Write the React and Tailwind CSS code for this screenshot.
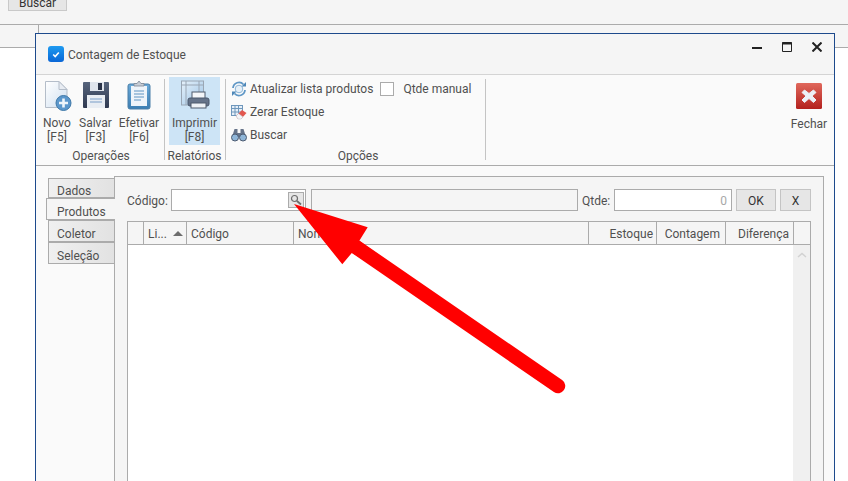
import React from 'react';

const NewIcon = () => (
  <svg width="30" height="32" viewBox="0 0 30 32">
    <defs>
      <linearGradient id="docFill" x1="0" y1="0" x2="1" y2="1">
        <stop offset="0" stopColor="#ffffff" />
        <stop offset="1" stopColor="#cfdff0" />
      </linearGradient>
    </defs>
    <path d="M3.5 2.5H17L25 10.5V28.5H3.5Z" fill="url(#docFill)" stroke="#b4bdc9" />
    <path d="M17 2.5V10.5H25Z" fill="#e8ecf2" stroke="#b4bdc9" />
    <circle cx="21.5" cy="24" r="7.5" fill="#5b97cc" stroke="#3f78a8" />
    <path d="M21.5 19.5V28.5M17 24H26" stroke="#eef5fb" strokeWidth="2.6" />
  </svg>
);

const SaveIcon = () => (
  <svg width="28" height="28" viewBox="0 0 28 28">
    <defs>
      <linearGradient id="floppy" x1="0" y1="0" x2="0" y2="1">
        <stop offset="0" stopColor="#56647c" />
        <stop offset="1" stopColor="#2f3950" />
      </linearGradient>
    </defs>
    <path d="M1 2a1 1 0 0 1 1-1h24a1 1 0 0 1 1 1v24a1 1 0 0 1-1 1H2a1 1 0 0 1-1-1Z" fill="url(#floppy)" />
    <rect x="8" y="1" width="14" height="9" fill="#dfe4ec" />
    <rect x="16" y="2" width="4" height="7" fill="#2a3348" />
    <rect x="5" y="14" width="18" height="13" fill="#e9edf3" />
    <path d="M8 18H20M8 21H20" stroke="#9fb8d6" strokeWidth="1.5" />
  </svg>
);

const ClipboardIcon = () => (
  <svg width="24" height="30" viewBox="0 0 24 30">
    <defs>
      <linearGradient id="clip" x1="0" y1="0" x2="0" y2="1">
        <stop offset="0" stopColor="#6aa9d8" />
        <stop offset="1" stopColor="#3a7db3" />
      </linearGradient>
    </defs>
    <rect x="1" y="4" width="22" height="25" rx="2" fill="url(#clip)" stroke="#4a7fa8" />
    <rect x="4" y="6" width="16" height="20" fill="#eef4fa" />
    <path d="M7 11H17M7 14H17M7 17H17M7 20H14" stroke="#5f93c2" strokeWidth="1.2" />
    <path d="M7 6V3.5H10L12 1L14 3.5H17V6Z" fill="#c7cdd6" stroke="#7c8794" strokeWidth="0.8" />
  </svg>
);

const PrinterIcon = () => (
  <svg width="30" height="32" viewBox="0 0 30 32">
    <defs>
      <linearGradient id="sheet" x1="0" y1="0" x2="1" y2="1">
        <stop offset="0" stopColor="#e6f1fa" />
        <stop offset="1" stopColor="#9dc4e6" />
      </linearGradient>
    </defs>
    <rect x="1.5" y="2" width="22" height="24" fill="url(#sheet)" stroke="#9aa6b4" />
    <path d="M1.5 6H23.5M6 2V26M19 2V13" stroke="#9aa6b4" />
    <rect x="12" y="13" width="13" height="7" fill="#f4f6f9" stroke="#4f5b6d" />
    <rect x="8" y="19" width="21" height="8" rx="2" fill="#66748a" stroke="#4b586d" />
    <rect x="11" y="24" width="15" height="5" fill="#eef2f6" stroke="#4f5b6d" />
  </svg>
);

const RefreshIcon = () => (
  <svg width="16" height="16" viewBox="0 0 16 16" fill="none">
    <circle cx="8" cy="8" r="3.8" fill="#e6f0f8" stroke="#8db6d8" />
    <path d="M2 7A6 6 0 0 1 12.5 3.5" stroke="#5f97c6" strokeWidth="1.8" />
    <path d="M14 9A6 6 0 0 1 3.5 12.5" stroke="#5f97c6" strokeWidth="1.8" />
    <path d="M10.5 5.5H15V1Z" fill="#4f88b8" />
    <path d="M5.5 10.5H1V15Z" fill="#4f88b8" />
  </svg>
);

const EraseIcon = () => (
  <svg width="16" height="16" viewBox="0 0 16 16">
    <rect x="0.5" y="1.5" width="11" height="10" fill="#e6eff8" stroke="#6f97bc" />
    <path d="M0.5 4.5H11.5M0.5 8H11.5M4 1.5V11.5M7.5 1.5V11.5" stroke="#6f97bc" />
    <path d="M5 12L11 6L15.5 9L10 15H7Z" fill="#e2574f" />
    <path d="M5 12L7.5 9.5L12 13L10 15H7Z" fill="#f4f5f8" stroke="#b9bec6" strokeWidth="0.5" />
  </svg>
);

const BinocularsIcon = () => (
  <svg width="16" height="14" viewBox="0 0 16 14">
    <path d="M3.5 1H6.5V5H9.5V1H12.5L15 9H1Z" fill="#66748a" />
    <circle cx="4" cy="9.5" r="3.5" fill="#8fb6d9" stroke="#4c5a70" />
    <circle cx="12" cy="9.5" r="3.5" fill="#8fb6d9" stroke="#4c5a70" />
  </svg>
);

const FecharIcon = () => (
  <svg width="26" height="26" viewBox="0 0 26 26">
    <defs>
      <linearGradient id="redBox" x1="0" y1="0" x2="0" y2="1">
        <stop offset="0" stopColor="#e0685c" />
        <stop offset="1" stopColor="#b3211e" />
      </linearGradient>
    </defs>
    <rect width="26" height="26" rx="1.5" fill="url(#redBox)" />
    <path d="M8.5 7L13 10.5L17.5 7L20 9.5L16 13L20 17L17.5 19.5L13 15.5L8.5 19.5L6 17L10 13L6 9.5Z" fill="#edf0f7" stroke="#edf0f7" strokeLinejoin="round" />
  </svg>
);

const SearchGlass = () => (
  <svg width="12" height="12" viewBox="0 0 12 12" fill="none">
    <circle cx="4.5" cy="4.5" r="3" stroke="#6d6d6d" strokeWidth="1.2" />
    <path d="M7 7L11 10.5" stroke="#6d6d6d" strokeWidth="1.8" />
  </svg>
);

function BigButton({ icon, top, bottom, width, active }) {
  return (
    <div className={`flex flex-col items-center h-[68px] flex-none pt-[3px] ${width} ${active ? 'bg-[#cde4f6]' : ''}`}>
      <div className="h-[30px] mb-[6px] flex items-center justify-center flex-none">{icon}</div>
      <div className="text-center leading-[14px] whitespace-nowrap">{top}<br />{bottom}</div>
    </div>
  );
}

const smallRows = [
  { icon: <RefreshIcon />, label: 'Atualizar lista produtos' },
  { icon: <EraseIcon />, label: 'Zerar Estoque' },
  { icon: <BinocularsIcon />, label: 'Buscar' },
];

const tabs = [
  { label: 'Dados', box: 'h-[20px] leading-[24px]' },
  { label: 'Produtos', box: 'h-[22px] leading-[26px]', active: true },
  { label: 'Coletor', box: 'h-[22px] leading-[26px]' },
  { label: 'Seleção', box: 'h-[22px] leading-[26px]' },
];

function Ribbon() {
  return (
    <div className="h-[91px] flex bg-[#fafafa] border-b border-[#ababab] text-[12px] text-[#505050]">
      <div className="w-[128px] flex flex-col pt-[2px] pl-[2px]">
        <div className="flex h-[68px]">
          <BigButton icon={<NewIcon />} top="Novo" bottom="[F5]" width="w-[38px]" />
          <BigButton icon={<SaveIcon />} top="Salvar" bottom="[F3]" width="w-[39px]" />
          <BigButton icon={<ClipboardIcon />} top="Efetivar" bottom="[F6]" width="w-[48px]" />
        </div>
        <div className="text-center leading-[14px] mt-[4px]">Operações</div>
      </div>
      <div className="w-px h-[81px] mt-[4px] bg-[#c4c4c4]" />
      <div className="w-[60px] flex flex-col items-center pt-[2px] pr-px">
        <BigButton icon={<PrinterIcon />} top="Imprimir" bottom="[F8]" width="w-[51px]" active />
        <div className="text-center leading-[14px] mt-[4px]">Relatórios</div>
      </div>
      <div className="w-px h-[81px] mt-[4px] bg-[#c4c4c4]" />
      <div className="w-[259px] flex flex-col pl-[5px] pt-[4px]">
        <div className="flex flex-col gap-[3px] h-[70px]">
          {smallRows.map((row, idx) => (
            <div key={row.label} className="flex items-center h-[20px] gap-[3px] whitespace-nowrap">
              <span className="w-[16px] flex justify-center">{row.icon}</span>
              <span>{row.label}</span>
              {idx === 0 && (
                <>
                  <span className="ml-[4px] w-[14px] h-[14px] border border-[#ababab] bg-white" />
                  <span className="ml-[6px]">Qtde manual</span>
                </>
              )}
            </div>
          ))}
        </div>
        <div className="text-center leading-[14px]">Opções</div>
      </div>
      <div className="w-px h-[81px] mt-[4px] bg-[#c4c4c4]" />
      <div className="ml-auto w-[50px] flex flex-col items-center pt-[8px]">
        <FecharIcon />
        <div className="mt-[8px] leading-[14px]">Fechar</div>
      </div>
    </div>
  );
}

function SideTabs() {
  return (
    <div className="w-[79px] pt-[12px] pl-[10px] shrink-0 flex flex-col items-end relative z-10">
      {tabs.map(tab => (
        tab.active ? (
          <div key={tab.label} className={`w-[69px] pl-[10px] bg-[#f5f5f5] border border-r-0 border-[#ababab] ${tab.box}`}>{tab.label}</div>
        ) : (
          <div key={tab.label} className={`w-[67px] pl-[8px] bg-gradient-to-r from-[#f0f0f0] to-[#e2e2e2] border border-[#ababab] ${tab.box}`}>{tab.label}</div>
        )
      ))}
    </div>
  );
}

const headerCells = [
  { label: '', width: 'w-[16px]' },
  { label: 'Li...', width: 'w-[43px] pl-[4px]', sort: true },
  { label: 'Código', width: 'w-[107px] pl-[4px]' },
  { label: 'Nome', width: 'w-[295px] pl-[4px]' },
  { label: 'Estoque', width: 'w-[68px] pr-[3px] text-right' },
  { label: 'Contagem', width: 'w-[69px] pr-[5px] text-right' },
  { label: 'Diferença', width: 'w-[68px] pr-[4px] text-right' },
];

function ProductGrid() {
  return (
    <div className="mt-[10px] ml-[12px] w-[684px] flex-1 flex flex-col border border-[#ababab] border-b-0">
      <div className="h-[23px] flex border-b border-[#ababab] bg-[#f5f5f5] shrink-0">
        {headerCells.map(cell => (
          <div key={cell.label} className={`${cell.width} h-full leading-[25px] border-r border-[#ababab] whitespace-nowrap overflow-hidden flex-none relative`}>
            {cell.label}
            {cell.sort && <span className="absolute left-[29px] top-[9px] w-0 h-0 border-x-[5px] border-x-transparent border-b-[5px] border-b-[#6d6d6d]" />}
          </div>
        ))}
      </div>
      <div className="flex-1 flex justify-end bg-white">
        <div className="w-[17px] bg-[#f0f0f0] flex justify-center pt-[7px]">
          <svg width="10" height="6" viewBox="0 0 10 6" fill="none">
            <path d="M1 5L5 1.5L9 5" stroke="#d2d2d2" strokeWidth="1.5" />
          </svg>
        </div>
      </div>
    </div>
  );
}

export default function App() {
  return (
    <div className="relative w-[848px] h-[481px] overflow-hidden bg-white text-[12px] text-[#505050]" style={{ fontFamily: 'Roboto, "Open Sans", sans-serif' }}>
      <div className="h-[25px] bg-[#f5f5f5] border-b border-[#ababab] pl-[8px] flex items-start">
        <div className="w-[59px] h-[12px] -mt-px bg-[#e6e6e6] border border-[#c9c9c9] text-center text-[#333] leading-[6px] overflow-hidden">Buscar</div>
      </div>
      <div className="h-[23px] bg-[#f5f5f5] border-b border-[#ababab] pl-[38px]">
        <div className="w-px h-full bg-[#ababab]" />
      </div>

      {/* janela */}
      <div className="absolute left-[35px] top-[33px] w-[800px] h-[470px] flex flex-col bg-[#fafafa] border border-[#1d4a8c] border-b-0">
        <div className="h-[41px] flex items-center bg-[#f5f5f5] border-b border-[#d4d4d4] shrink-0 pl-[12px] pr-[12px] text-[#505050]">
          <span className="w-[16px] h-[16px] rounded-[3px] bg-gradient-to-b from-[#1f9af0] to-[#0b66d6] flex items-center justify-center">
            <svg width="8" height="7" viewBox="0 0 10 8" fill="none">
              <path d="M1.5 4L4 6.5L8.5 1.5" stroke="#fff" strokeWidth="2" />
            </svg>
          </span>
          <span className="ml-[4px] pt-[2px]">Contagem de Estoque</span>
          <div className="ml-auto self-start mt-[8px] flex items-center gap-[20px] text-[#222]">
            <svg width="10" height="10" viewBox="0 0 10 10"><path d="M0 6H10" stroke="currentColor" strokeWidth="2" /></svg>
            <svg width="10" height="10" viewBox="0 0 10 10" fill="none"><path d="M.5 .5H9.5V9.5H.5Z" stroke="currentColor" /><path d="M0 1.5H10" stroke="currentColor" strokeWidth="2" /></svg>
            <svg width="10" height="10" viewBox="0 0 10 10"><path d="M.5 .5L9.5 9.5M9.5 .5L.5 9.5" stroke="currentColor" strokeWidth="2" /></svg>
          </div>
        </div>

        <Ribbon />

        <div className="flex-1 flex">
          <SideTabs />
          <div className="mt-[10px] w-[710px] -ml-px flex flex-col bg-[#f5f5f5] border border-[#ababab] border-b-0">
            <div className="flex items-center h-[22px] mt-[12px] ml-[12px] shrink-0">
              <span className="w-[44px] pt-[2px]">Código:</span>
              <div className="w-[135px] h-[22px] bg-white border border-[#ababab] flex justify-end items-center pr-px">
                <div className="w-[16px] h-[16px] bg-[#e6e6e6] border border-[#ababab] flex items-center justify-center"><SearchGlass /></div>
              </div>
              <div className="ml-[5px] w-[267px] h-[22px] bg-[#f5f5f5] border border-[#ababab]" />
              <span className="ml-[4px] w-[32px] pt-[2px]">Qtde:</span>
              <div className="w-[118px] h-[22px] bg-white border border-[#ababab] text-right pr-[4px] leading-[22px] text-[#a8a8a8]">0</div>
              <div className="ml-[4px] w-[40px] h-[22px] bg-[#e6e6e6] border border-[#c4c4c4] text-center leading-[22px] text-[#333]">OK</div>
              <div className="ml-[4px] w-[31px] h-[22px] bg-[#e6e6e6] border border-[#c4c4c4] text-center leading-[22px] text-[#333]">X</div>
            </div>
            <ProductGrid />
          </div>
        </div>
      </div>

      {/* seta vermelha */}
      <svg className="absolute inset-0 pointer-events-none" width="848" height="481" viewBox="0 0 848 481">
        <path d="M294 204L367.7 227.3L359.3 240.7L558 386L352 252.7L342.3 264.3Z" fill="#ff0000" />
        <path d="M355.5 246.7L558 386" stroke="#ff0000" strokeWidth="14.5" strokeLinecap="round" />
      </svg>
    </div>
  );
}
